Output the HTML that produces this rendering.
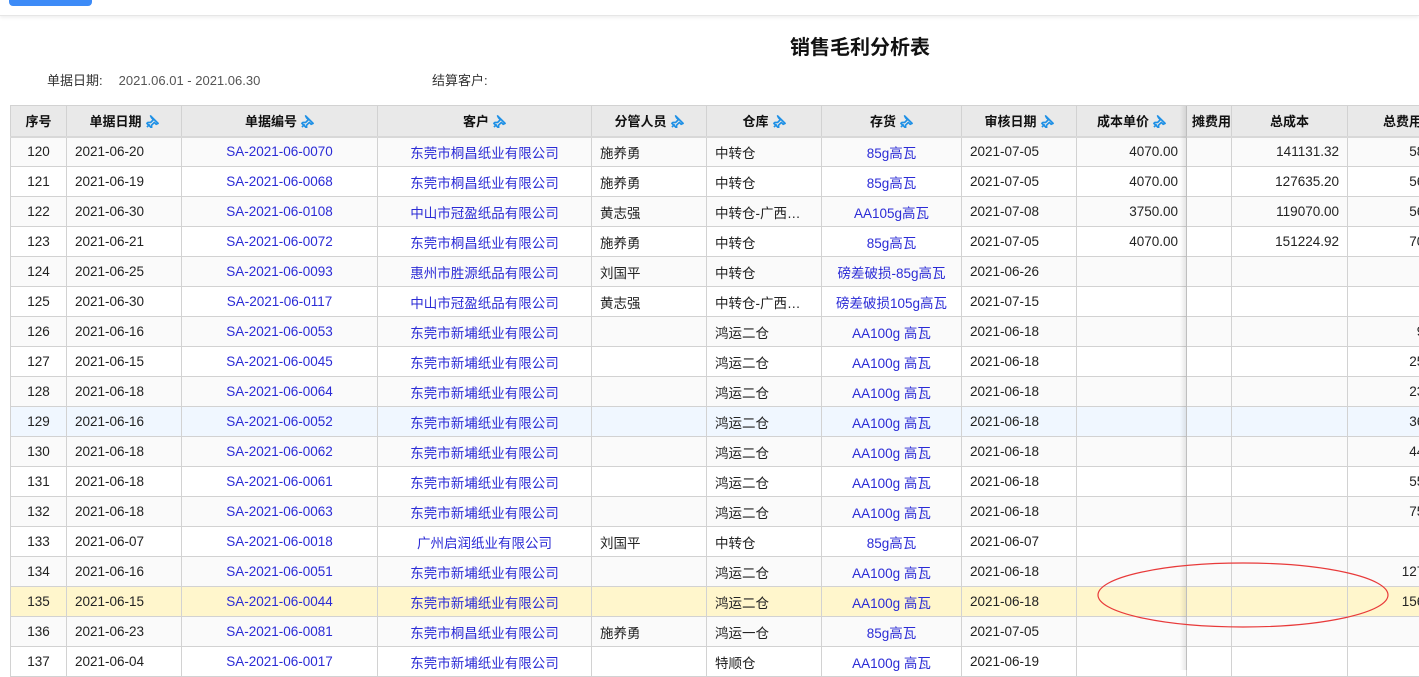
<!DOCTYPE html>
<html><head><meta charset="utf-8"><style>
*{margin:0;padding:0;box-sizing:border-box}
body{width:1419px;height:670px;overflow:hidden;background:#fff;font-family:"Liberation Sans","Noto Sans CJK SC",sans-serif;font-size:13.5px;color:#222;position:relative}
.btn{position:absolute;left:9px;top:0;width:83px;height:6px;background:#3d8bf7;border-radius:0 0 4px 4px}
.bar{position:absolute;left:0;top:0;width:1419px;height:16px;border-bottom:1px solid #e6e6e6;box-shadow:0 2px 3px rgba(0,0,0,.06)}
.title{position:absolute;left:0;width:1720px;top:31px;text-align:center;font-size:20px;font-weight:bold;color:#111}
.info{position:absolute;top:70px;font-size:13px;color:#333}
.info span{color:#555;margin-left:16px}
table{position:absolute;left:10px;top:105px;border-collapse:collapse;table-layout:fixed;width:1460px}
td,th{border:1px solid #d2d2d2;height:30px;padding:0 8px;white-space:nowrap;overflow:hidden}
th{background:#e9e9e9;font-weight:bold;font-size:13px;color:#111;height:31px;border-bottom:2px solid #d8d8d8}
tr.g td{background:#fafafa}
tr.b td{background:#f0f7ff}
tr.y td{background:#fff6cc}
.c{text-align:center}.r{text-align:right}
td.z{padding-right:12px}
.l{color:#2b2bd6}
svg.p{width:13px;height:13px;vertical-align:-2px;margin-left:4px}
.sh{position:absolute;left:1180px;top:106px;width:7px;height:564px;background:linear-gradient(to right,rgba(0,0,0,0),rgba(0,0,0,.10));pointer-events:none}
</style></head><body>
<div class="bar"></div><div class="btn"></div>
<div class="title">销售毛利分析表</div>
<div class="info" style="left:47px">单据日期:<span>2021.06.01 - 2021.06.30</span></div>
<div class="info" style="left:432px">结算客户:</div>
<svg width="0" height="0" style="position:absolute"><defs><symbol id="pin" viewBox="0 0 14 14"><path d="M5 1l8 8-2 1-2-2-3 3v3L5 13 1 9l1-1h3l3-3-2-2z" fill="none" stroke="#1e90e6" stroke-width="1.8" stroke-linejoin="round"/><path d="M1 13l3-3" stroke="#1e90e6" stroke-width="1.8"/></symbol></defs></svg>
<table>
<colgroup><col style="width:56px"><col style="width:115px"><col style="width:196px"><col style="width:214px"><col style="width:115px"><col style="width:115px"><col style="width:140px"><col style="width:115px"><col style="width:110px"><col style="width:45px"><col style="width:116px"><col style="width:123px"></colgroup>
<tr><th>序号</th><th>单据日期<svg class="p"><use href="#pin"/></svg></th><th>单据编号<svg class="p"><use href="#pin"/></svg></th><th>客户<svg class="p"><use href="#pin"/></svg></th><th>分管人员<svg class="p"><use href="#pin"/></svg></th><th>仓库<svg class="p"><use href="#pin"/></svg></th><th>存货<svg class="p"><use href="#pin"/></svg></th><th>审核日期<svg class="p"><use href="#pin"/></svg></th><th>成本单价<svg class="p"><use href="#pin"/></svg></th><th style="padding:0;text-align:right;direction:rtl">摊费用</th><th>总成本</th><th style="text-align:left;padding-left:35px">总费用</th></tr>
<tr class="g"><td class="c">120</td><td>2021-06-20</td><td class="c l">SA-2021-06-0070</td><td class="c l">东莞市桐昌纸业有限公司</td><td>施养勇</td><td>中转仓</td><td class="c l">85g高瓦</td><td>2021-07-05</td><td class="r">4070.00</td><td></td><td class="r">141131.32</td><td class="r z">5870.00</td></tr>
<tr><td class="c">121</td><td>2021-06-19</td><td class="c l">SA-2021-06-0068</td><td class="c l">东莞市桐昌纸业有限公司</td><td>施养勇</td><td>中转仓</td><td class="c l">85g高瓦</td><td>2021-07-05</td><td class="r">4070.00</td><td></td><td class="r">127635.20</td><td class="r z">5690.00</td></tr>
<tr class="g"><td class="c">122</td><td>2021-06-30</td><td class="c l">SA-2021-06-0108</td><td class="c l">中山市冠盈纸品有限公司</td><td>黄志强</td><td>中转仓-广西…</td><td class="c l">AA105g高瓦</td><td>2021-07-08</td><td class="r">3750.00</td><td></td><td class="r">119070.00</td><td class="r z">5640.00</td></tr>
<tr><td class="c">123</td><td>2021-06-21</td><td class="c l">SA-2021-06-0072</td><td class="c l">东莞市桐昌纸业有限公司</td><td>施养勇</td><td>中转仓</td><td class="c l">85g高瓦</td><td>2021-07-05</td><td class="r">4070.00</td><td></td><td class="r">151224.92</td><td class="r z">7010.00</td></tr>
<tr class="g"><td class="c">124</td><td>2021-06-25</td><td class="c l">SA-2021-06-0093</td><td class="c l">惠州市胜源纸品有限公司</td><td>刘国平</td><td>中转仓</td><td class="c l">磅差破损-85g高瓦</td><td>2021-06-26</td><td></td><td></td><td></td><td></td></tr>
<tr><td class="c">125</td><td>2021-06-30</td><td class="c l">SA-2021-06-0117</td><td class="c l">中山市冠盈纸品有限公司</td><td>黄志强</td><td>中转仓-广西…</td><td class="c l">磅差破损105g高瓦</td><td>2021-07-15</td><td></td><td></td><td></td><td></td></tr>
<tr class="g"><td class="c">126</td><td>2021-06-16</td><td class="c l">SA-2021-06-0053</td><td class="c l">东莞市新埔纸业有限公司</td><td></td><td>鸿运二仓</td><td class="c l">AA100g 高瓦</td><td>2021-06-18</td><td></td><td></td><td></td><td class="r z">900.00</td></tr>
<tr><td class="c">127</td><td>2021-06-15</td><td class="c l">SA-2021-06-0045</td><td class="c l">东莞市新埔纸业有限公司</td><td></td><td>鸿运二仓</td><td class="c l">AA100g 高瓦</td><td>2021-06-18</td><td></td><td></td><td></td><td class="r z">2550.00</td></tr>
<tr class="g"><td class="c">128</td><td>2021-06-18</td><td class="c l">SA-2021-06-0064</td><td class="c l">东莞市新埔纸业有限公司</td><td></td><td>鸿运二仓</td><td class="c l">AA100g 高瓦</td><td>2021-06-18</td><td></td><td></td><td></td><td class="r z">2330.00</td></tr>
<tr class="b"><td class="c">129</td><td>2021-06-16</td><td class="c l">SA-2021-06-0052</td><td class="c l">东莞市新埔纸业有限公司</td><td></td><td>鸿运二仓</td><td class="c l">AA100g 高瓦</td><td>2021-06-18</td><td></td><td></td><td></td><td class="r z">3600.00</td></tr>
<tr class="g"><td class="c">130</td><td>2021-06-18</td><td class="c l">SA-2021-06-0062</td><td class="c l">东莞市新埔纸业有限公司</td><td></td><td>鸿运二仓</td><td class="c l">AA100g 高瓦</td><td>2021-06-18</td><td></td><td></td><td></td><td class="r z">4400.00</td></tr>
<tr><td class="c">131</td><td>2021-06-18</td><td class="c l">SA-2021-06-0061</td><td class="c l">东莞市新埔纸业有限公司</td><td></td><td>鸿运二仓</td><td class="c l">AA100g 高瓦</td><td>2021-06-18</td><td></td><td></td><td></td><td class="r z">5500.00</td></tr>
<tr class="g"><td class="c">132</td><td>2021-06-18</td><td class="c l">SA-2021-06-0063</td><td class="c l">东莞市新埔纸业有限公司</td><td></td><td>鸿运二仓</td><td class="c l">AA100g 高瓦</td><td>2021-06-18</td><td></td><td></td><td></td><td class="r z">7500.00</td></tr>
<tr><td class="c">133</td><td>2021-06-07</td><td class="c l">SA-2021-06-0018</td><td class="c l">广州启润纸业有限公司</td><td>刘国平</td><td>中转仓</td><td class="c l">85g高瓦</td><td>2021-06-07</td><td></td><td></td><td></td><td></td></tr>
<tr class="g"><td class="c">134</td><td>2021-06-16</td><td class="c l">SA-2021-06-0051</td><td class="c l">东莞市新埔纸业有限公司</td><td></td><td>鸿运二仓</td><td class="c l">AA100g 高瓦</td><td>2021-06-18</td><td></td><td></td><td></td><td class="r z">12700.00</td></tr>
<tr class="y"><td class="c">135</td><td>2021-06-15</td><td class="c l">SA-2021-06-0044</td><td class="c l">东莞市新埔纸业有限公司</td><td></td><td>鸿运二仓</td><td class="c l">AA100g 高瓦</td><td>2021-06-18</td><td></td><td></td><td></td><td class="r z">15600.00</td></tr>
<tr class="g"><td class="c">136</td><td>2021-06-23</td><td class="c l">SA-2021-06-0081</td><td class="c l">东莞市桐昌纸业有限公司</td><td>施养勇</td><td>鸿运一仓</td><td class="c l">85g高瓦</td><td>2021-07-05</td><td></td><td></td><td></td><td></td></tr>
<tr><td class="c">137</td><td>2021-06-04</td><td class="c l">SA-2021-06-0017</td><td class="c l">东莞市新埔纸业有限公司</td><td></td><td>特顺仓</td><td class="c l">AA100g 高瓦</td><td>2021-06-19</td><td></td><td></td><td></td><td></td></tr>
</table>
<div class="sh"></div>
<svg style="position:absolute;left:0;top:0" width="1419" height="670"><ellipse cx="1243" cy="595" rx="145" ry="32" fill="none" stroke="#e83a3a" stroke-width="1.2"/></svg>
</body></html>
